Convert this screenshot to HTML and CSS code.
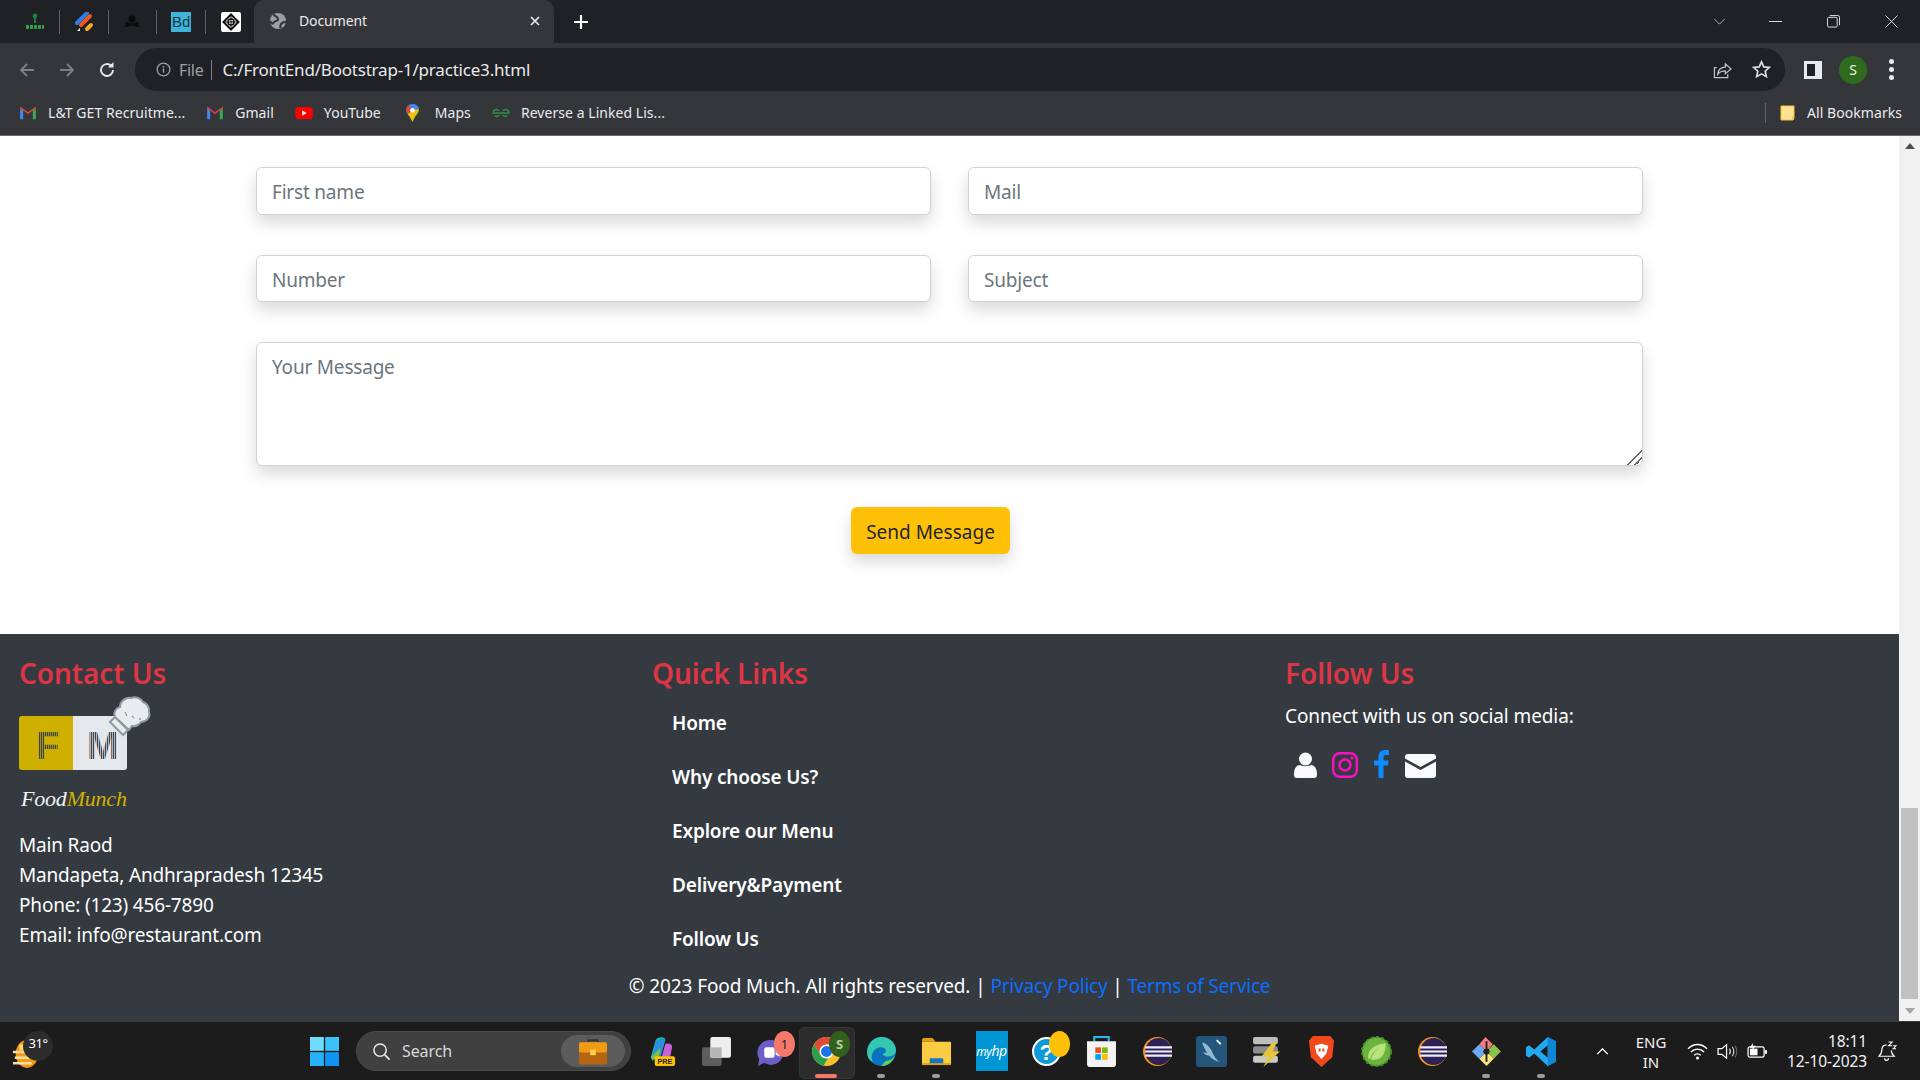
FILE: index.html
```html
<!DOCTYPE html>
<html lang="en">
<head>
<meta charset="utf-8">
<title>Document</title>
<link rel="stylesheet" href="styles.css">
</head>
<body>
<div class="app">
  <div class="tabbar">
    <div class="pins">
      <div class="pin"><svg viewBox="0 0 20 20" class="ic20"><path d="M10 2v9" stroke="#1a7f3c" stroke-width="2"/><circle cx="10" cy="4" r="2.4" fill="#1a7f3c"/><path d="M1 15h18" stroke="#2e9e4f" stroke-width="4" stroke-dasharray="3 1"/></svg></div>
      <div class="pin"><svg viewBox="0 0 20 20" class="ic20"><path d="M3 11 13 1" stroke="#2a7ff0" stroke-width="4" stroke-linecap="round"/><path d="M7 13 16 4" stroke="#f4541d" stroke-width="4" stroke-linecap="round"/><path d="M13 17l4-4" stroke="#f9a825" stroke-width="4" stroke-linecap="round"/><path d="M3 19l3-3v3z" fill="#fff"/></svg></div>
      <div class="pin"><svg viewBox="0 0 20 20" class="ic20"><circle cx="10" cy="7" r="3.5" fill="#0b0b0b"/><path d="M3 14l14-3M3 11l14 3" stroke="#0b0b0b" stroke-width="2"/></svg></div>
      <div class="pin"><div class="bd">Bd</div></div>
      <div class="pin last"><svg viewBox="0 0 20 20" class="ic20"><rect width="20" height="20" rx="2" fill="#fff"/><path d="M10 2.500 17.500 10 10 17.500 2.500 10z" fill="none" stroke="#111" stroke-width="2"/><circle cx="10" cy="10" r="3" fill="none" stroke="#111" stroke-width="1.600"/><path d="M10 3v14M3 10h14" stroke="#111" stroke-width="1"/></svg></div>
    </div>
    <div class="tab">
      <svg viewBox="0 0 20 20" class="ic18"><circle cx="10" cy="10" r="9" fill="#9aa0a6"/><path d="M5 3c2 2 5 2 5 5s-4 1-5 4c-1 2-3 0-4-2M13 18c-1-3 0-5 2-6s3-1 4-1" fill="none" stroke="#35363a" stroke-width="2.400"/></svg>
      <span class="tab-title">Document</span>
      <svg viewBox="0 0 12 12" class="ic12"><path d="M2 2l8 8M10 2l-8 8" stroke="#e8eaed" stroke-width="1.700"/></svg>
    </div>
    <svg viewBox="0 0 16 16" class="plus"><path d="M8 1v14M1 8h14" stroke="#fff" stroke-width="2.200"/></svg>
    <div class="winctl">
      <svg viewBox="0 0 14 8" class="wc-chev"><path d="M1 1l6 6 6-6" fill="none" stroke="#bdc1c6" stroke-width="1"/></svg>
      <svg viewBox="0 0 14 14" class="wc"><path d="M0 7h14" stroke="#e8eaed" stroke-width="1"/></svg>
      <svg viewBox="0 0 14 14" class="wc"><rect x=".5" y="2.500" width="10.500" height="10.500" rx="1.500" fill="none" stroke="#e8eaed"/><path d="M3 .5h8.500a2 2 0 0 1 2 2V11" fill="none" stroke="#e8eaed"/></svg>
      <svg viewBox="0 0 14 14" class="wc"><path d="M.5.5l13 13M13.500.5l-13 13" stroke="#e8eaed" stroke-width="1"/></svg>
    </div>
  </div>

  <div class="toolbar">
    <svg viewBox="0 0 18 18" class="nav"><path d="M16 9H3M9 3 3 9l6 6" fill="none" stroke="#7d8085" stroke-width="1.800"/></svg>
    <svg viewBox="0 0 18 18" class="nav"><path d="M2 9h13M9 3l6 6-6 6" fill="none" stroke="#7d8085" stroke-width="1.800"/></svg>
    <svg viewBox="0 0 18 18" class="nav"><path d="M15 9a6 6 0 1 1-2-4.500" fill="none" stroke="#e8eaed" stroke-width="1.900"/><path d="M15.500 1v5.500H10z" fill="#e8eaed"/></svg>
    <div class="omnibox">
      <svg viewBox="0 0 16 16" class="info"><circle cx="8" cy="8" r="6.800" fill="none" stroke="#9aa0a6" stroke-width="1.400"/><path d="M8 7v4.500M8 4.200v1.600" stroke="#9aa0a6" stroke-width="1.500"/></svg>
      <span class="scheme">File</span>
      <span class="url">C:/FrontEnd/Bootstrap-1/practice3.html</span>
      <span class="spacer"></span>
      <svg viewBox="0 0 20 20" class="omni-ic"><path d="M4 8H1.500v10.500h14V15" fill="none" stroke="#bdc1c6" stroke-width="1.300"/><path d="M5 15c.5-5 4-7.500 8-7.500V4l6 5.500-6 5V11.500c-3.500 0-6 1-8 3.500z" fill="none" stroke="#bdc1c6" stroke-width="1.300"/></svg>
      <svg viewBox="0 0 20 20" class="omni-ic"><path d="m10 2 2.400 5.300 5.800.6-4.300 3.900 1.200 5.700-5.100-2.900-5.100 2.900 1.200-5.700L1.800 7.900l5.800-.6z" fill="none" stroke="#dadce0" stroke-width="1.800"/></svg>
    </div>
    <div class="panel-ic"><div class="panel-l"></div></div>
    <div class="avatar">S</div>
    <div class="dots"><i></i><i></i><i></i></div>
  </div>

  <div class="bookmarks">
    <div class="bm"><svg viewBox="0 0 20 16" class="bm-ic"><path d="M1 15V2.500l3.500 2.500V15z" fill="#4285f4"/><path d="M15.500 15V5L19 2.500V15z" fill="#34a853"/><path d="M1 2.500 10 9l9-6.500v-2L15.500 3 10 7 4.500 3 1 .5z" fill="#ea4335"/></svg><span>L&amp;T GET Recruitme...</span></div>
    <div class="bm"><svg viewBox="0 0 20 16" class="bm-ic"><path d="M1 15V2.500l3.500 2.500V15z" fill="#4285f4"/><path d="M15.500 15V5L19 2.500V15z" fill="#34a853"/><path d="M1 2.500 10 9l9-6.500v-2L15.500 3 10 7 4.500 3 1 .5z" fill="#ea4335"/></svg><span>Gmail</span></div>
    <div class="bm"><svg viewBox="0 0 20 16" class="bm-ic"><rect y="1" width="20" height="14" rx="4" fill="#f00"/><path d="m8 5 5 3-5 3z" fill="#fff"/></svg><span>YouTube</span></div>
    <div class="bm"><svg viewBox="0 0 16 22" class="bm-map"><path d="M8 1a7 7 0 0 0-7 7c0 4 4 6 7 13 3-7 7-9 7-13a7 7 0 0 0-7-7z" fill="#34a853"/><path d="M8 1a7 7 0 0 1 7 5L3 12 1 8a7 7 0 0 1 7-7z" fill="#4285f4"/><path d="M1 8a7 7 0 0 1 3-5.600L8 8l-5 4z" fill="#ea4335"/><path d="M3 12 8 8l7-1c0 3-3 5-5 9l-2 5c-1-3-3-6-5-9z" fill="#fbbc04"/><circle cx="8" cy="8" r="2.600" fill="#fff"/></svg><span>Maps</span></div>
    <div class="bm"><svg viewBox="0 0 20 12" class="bm-ic"><path d="M10 6H1a4 4 0 0 1 7-2.500M10 6h9a4 4 0 0 0-7-2.500M3 9a4 4 0 0 0 5-.5M17 9a4 4 0 0 1-5-.5" fill="none" stroke="#2f8d46" stroke-width="1.700"/></svg><span>Reverse a Linked Lis...</span></div>
    <span class="spacer"></span>
    <div class="bm-sep"></div>
    <div class="bm all"><svg viewBox="0 0 16 16" class="bm-folder"><path d="M1 1h13v12l-1 2H1z" fill="#fde293" stroke="#f2c53d" stroke-width="1"/><path d="M12 15v-3l2-1v4z" fill="#f2c53d"/></svg><span>All Bookmarks</span></div>
  </div>

  <div class="viewport">
    <div class="page">
      <section class="contact">
        <form class="form-grid">
          <input class="field" type="text" placeholder="First name">
          <input class="field" type="text" placeholder="Mail">
          <input class="field" type="text" placeholder="Number">
          <input class="field" type="text" placeholder="Subject">
          <textarea class="field message" placeholder="Your Message"></textarea>
        </form>
        <button class="send" type="button">Send Message</button>
      </section>

      <footer class="footer">
        <div class="cols">
          <div class="col">
            <h3>Contact Us</h3>
            <svg class="logo" viewBox="0 0 135 74">
              <defs>
                <pattern id="stripe" width="2" height="2" patternUnits="userSpaceOnUse"><rect width="1.300" height="2" fill="#3f454b"/></pattern>
              </defs>
              <path d="M3 20h51v54H3a3 3 0 0 1-3-3V23a3 3 0 0 1 3-3z" fill="#cfb000"/>
              <path d="M54 20h51a3 3 0 0 1 3 3v48a3 3 0 0 1-3 3H54z" fill="#e4e7eb"/>
              <text x="17" y="63" class="logo-letter" fill="url(#stripe)">F</text>
              <text x="68" y="63" class="logo-letter" fill="url(#stripe)">M</text>
              <path d="M91 26 104 39l5-5-13-13z" fill="#e9ecef" stroke="#8f98a3" stroke-width="2"/>
              <path d="M96 21c-2-5 1-9 5-10 0-6 6-10 11-9 4-2 10 0 12 4 4 1 7 6 6 10 2 5-3 10-8 10-2 3-6 5-9 4l-3 4z" fill="#e9ecef" stroke="#8f98a3" stroke-width="2"/>
              <path d="M106 16l2 4M113 20l2 2M120 23l2 0" stroke="#8f98a3" stroke-width="1.300"/>
            </svg>
            <div class="brand"><span class="brand-a">Food</span><span class="brand-b">Munch</span></div>
            <address>
              <div>Main Raod</div>
              <div>Mandapeta, Andhrapradesh 12345</div>
              <div>Phone: (123) 456-7890</div>
              <div>Email: info@restaurant.com</div>
            </address>
          </div>
          <div class="col">
            <h3>Quick Links</h3>
            <ul class="links">
              <li>Home</li>
              <li>Why choose Us?</li>
              <li>Explore our Menu</li>
              <li>Delivery&amp;Payment</li>
              <li>Follow Us</li>
            </ul>
          </div>
          <div class="col">
            <h3>Follow Us</h3>
            <p class="connect">Connect with us on social media:</p>
            <div class="social">
              <svg viewBox="0 0 23 26" class="s-person"><circle cx="11.500" cy="7" r="6.500" fill="#f8f9fa"/><path d="M0 22c0-6 3-9 6-9 2 1.500 9 1.500 11 0 3 0 6 3 6 9v1a3 3 0 0 1-3 3H3a3 3 0 0 1-3-3z" fill="#f8f9fa"/></svg>
              <svg viewBox="0 0 26 26" class="s-insta"><rect x="1.200" y="1.200" width="23.600" height="23.600" rx="6.500" fill="none" stroke="#ff0fc4" stroke-width="2.400"/><circle cx="13" cy="13" r="5.500" fill="none" stroke="#ff0fc4" stroke-width="2.400"/><circle cx="20" cy="6" r="1.600" fill="#ff0fc4"/></svg>
              <svg viewBox="0 0 15 28" class="s-fb"><path d="M4.500 28V15.500H0V10.500h4.500V7c0-4.500 2.500-7 6.500-7 1.500 0 3 .1 4 .3V5h-2.800C10 5 9.500 6 9.500 7.500v3h5.200l-.8 5H9.500V28z" fill="#0d8bff"/></svg>
              <svg viewBox="0 0 31 24" class="s-mail"><path d="M3 0h25a3 3 0 0 1 3 3v1.500L15.500 13 0 4.500V3a3 3 0 0 1 3-3z" fill="#f8f9fa"/><path d="M0 7.500l15.500 8.500L31 7.500V21a3 3 0 0 1-3 3H3a3 3 0 0 1-3-3z" fill="#f8f9fa"/></svg>
            </div>
          </div>
        </div>
        <p class="copyright">© 2023 Food Much. All rights reserved. | <a>Privacy Policy</a> | <a>Terms of Service</a></p>
      </footer>
    </div>
    <div class="scrollbar">
      <div class="sb-btn"><svg viewBox="0 0 10 6" class="sb-arrow"><path d="M5 0l5 6H0z" fill="#505050"/></svg></div>
      <div class="sb-track"><div class="sb-thumb"></div></div>
      <div class="sb-btn"><svg viewBox="0 0 10 6" class="sb-arrow"><path d="M5 6 0 0h10z" fill="#a3a3a3"/></svg></div>
    </div>
  </div>

  <div class="taskbar">
    <div class="weather">
      <svg viewBox="0 0 30 34" class="wx"><ellipse cx="16" cy="18" rx="12" ry="15" fill="#f59a13"/><path d="M8 8h16v6H8z" fill="#ffd970"/><path d="M1 16h22M3 22h26M1 28h20" stroke="#f6dca5" stroke-width="2.600"/></svg>
      <span class="wx-temp">31°</span>
    </div>
    <svg viewBox="0 0 30 30" class="win"><rect width="14.300" height="14.300" fill="#6fdcfd"/><rect x="15.700" width="14.300" height="14.300" fill="#3cc2fb"/><rect y="15.700" width="14.300" height="14.300" fill="#27b1f8"/><rect x="15.700" y="15.700" width="14.300" height="14.300" fill="#0f94f3"/></svg>
    <div class="search">
      <svg viewBox="0 0 20 20" class="search-ic"><circle cx="8.500" cy="8.500" r="6.500" fill="none" stroke="#e6e6e6" stroke-width="1.600"/><path d="m13.500 13.500 5 5" stroke="#e6e6e6" stroke-width="1.800"/></svg>
      <span class="search-text">Search</span>
      <span class="spacer"></span>
      <div class="search-pill"><svg viewBox="0 0 30 28" class="case"><path d="M10 5V2h10v3" fill="none" stroke="#333" stroke-width="2"/><rect y="4" width="30" height="24" rx="2" fill="#b5650f"/><rect y="4" width="30" height="11" rx="2" fill="#ef9b16"/><rect x="12" y="12" width="6" height="6" fill="#ffd24d"/></svg></div>
    </div>
    <div class="apps">
      <div class="app-ic"><svg viewBox="0 0 30 32"><path d="M4 22 9 4c1-3 8-4 10-1L6 26z" fill="#1fb7a8"/><path d="M8 8c2-5 10-6 11-4l-5 18H6z" fill="#2a8fe0"/><path d="M15 22l4-14c3-1 7 0 7 3l-2 11z" fill="#c860d8"/><path d="M4 22 14 12l-2 12H6z" fill="#7fc242"/><rect x="8" y="21" width="21" height="10" rx="2" fill="#ffc300"/><text x="18.500" y="29.200" class="pre">PRE</text></svg></div>
      <div class="app-ic"><svg viewBox="0 0 30 30"><rect x="1" y="11" width="19" height="18" rx="2" fill="#5e5e5e"/><rect x="9" y="1" width="20" height="20" rx="2" fill="#eeeeee"/><rect x="9" y="11" width="11" height="10" fill="#b5b5b5"/></svg></div>
      <div class="app-ic badge-wrap"><svg viewBox="0 0 30 30"><path d="M14 4a12 12 0 1 1-6 22l-6 3 1-7A12 12 0 0 1 14 4z" fill="#6b5fc7"/><rect x="8" y="11" width="10" height="10" rx="2" fill="#fff"/><path d="m19 14 4-2v8l-4-2z" fill="#fff"/></svg><span class="badge red">1</span></div>
      <div class="app-ic active badge-wrap"><svg viewBox="0 0 30 30"><circle cx="15" cy="15" r="14" fill="#fbc02d"/><path d="M15 1a14 14 0 0 0-12 7l6 10 6-10h12A14 14 0 0 0 15 1z" fill="#dd4b39"/><path d="M3 8a14 14 0 0 0 9 20.700L18 19l-9-1z" fill="#2e9e4f"/><circle cx="15" cy="15" r="6.800" fill="#fff"/><circle cx="15" cy="15" r="5.300" fill="#1a73e8"/></svg><span class="badge green">S</span><span class="run-bar"></span></div>
      <div class="app-ic dotted"><svg viewBox="0 0 30 30"><circle cx="15" cy="15" r="14" fill="#0c72bd"/><path d="M1 15C2 5 10 1 15 1c8 0 14 6 14 13 0 4-4 6-8 6-3 0-5-2-5-3 3 0 4-2 3-4-2-3-8-3-11 1-3 3-3 8-1 11C3 24 1 20 1 15z" fill="#33c7b0"/><path d="M19 24c4 0 7-2 9-5-2 6-7 10-13 10z" fill="#5fd35e"/></svg></div>
      <div class="app-ic dotted"><svg viewBox="0 0 32 30"><path d="M1 3a2 2 0 0 1 2-2h9l3 4H1z" fill="#e3a008"/><rect x="1" y="5" width="30" height="24" rx="1" fill="#fbcb43"/><rect x="9" y="22" width="14" height="7" rx="1" fill="#1278c8"/><path d="M1 27h30v2H1z" fill="#e3a008"/></svg></div>
      <div class="app-ic"><div class="myhp">my<b>hp</b></div></div>
      <div class="app-ic badge-wrap"><svg viewBox="0 0 30 30"><circle cx="15" cy="15" r="13" fill="#0e9ad7" stroke="#fff" stroke-width="2"/><text x="15" y="23" class="qm">?</text></svg><span class="badge yellow"></span></div>
      <div class="app-ic"><svg viewBox="0 0 30 30"><path d="M8 5V1h14v4" fill="none" stroke="#2db7f2" stroke-width="2"/><path d="M1 5h28v22a3 3 0 0 1-3 3H4a3 3 0 0 1-3-3z" fill="#f4f4f4"/><rect x="9" y="11" width="5.500" height="5.500" fill="#f25022"/><rect x="15.500" y="11" width="5.500" height="5.500" fill="#7fba00"/><rect x="9" y="17.500" width="5.500" height="5.500" fill="#00a4ef"/><rect x="15.500" y="17.500" width="5.500" height="5.500" fill="#ffb900"/></svg></div>
      <div class="app-ic"><svg viewBox="0 0 30 30"><circle cx="16" cy="15" r="14" fill="#f7941e"/><circle cx="17" cy="15" r="13" fill="#2c2255"/><path d="M4 11h26M4 15h26M4 19h26" stroke="#f1eefc" stroke-width="2"/></svg></div>
      <div class="app-ic"><svg viewBox="0 0 30 30"><rect width="30" height="30" rx="3" fill="#24567c"/><path d="M6 6c4 1 7 4 9 8s3 8 8 11c-5-1-8-3-10-6-2 0-5-1-6-3 2 0 3 0 4 1C9 13 7 10 6 6z" fill="#94b9d3"/><path d="M20 4l4 4" stroke="#d6e4ee" stroke-width="2"/></svg></div>
      <div class="app-ic"><svg viewBox="0 0 30 30"><rect x="2" y="1" width="24" height="7" rx="2" fill="#bdbdbd"/><rect x="2" y="10" width="24" height="7" rx="2" fill="#8d8d8d"/><rect x="2" y="19" width="24" height="7" rx="2" fill="#c9c9c9"/><path d="M21 6 10 20h7l-5 10 16-15h-7l4-9z" fill="#e8c33c"/></svg></div>
      <div class="app-ic"><svg viewBox="0 0 28 32"><path d="M14 0h9l4 5-2 17-11 10L3 22 1 5l4-5z" fill="#f1481c"/><path d="M7 10l7-2 7 2-2 8-5 6-5-6z" fill="#fff"/><path d="M11 13h2v3h-2zM15 13h2v3h-2z" fill="#f1481c"/></svg></div>
      <div class="app-ic"><svg viewBox="0 0 30 30"><circle cx="15" cy="15" r="14" fill="#6db33f" stroke="#3f8e2a" stroke-width="2" stroke-dasharray="3 2"/><path d="M7 22c-1-9 6-14 17-15 0 10-4 17-14 16 0-5 3-8 7-11-4 2-7 5-8 10z" fill="#b8e27d"/></svg></div>
      <div class="app-ic"><svg viewBox="0 0 30 30"><circle cx="16" cy="15" r="14" fill="#f7941e"/><circle cx="17" cy="15" r="13" fill="#2c2255"/><path d="M4 11h26M4 15h26M4 19h26" stroke="#f1eefc" stroke-width="2"/></svg></div>
      <div class="app-ic dotted"><svg viewBox="0 0 30 30"><path d="M15 15 8 8l6-7 7 7z" fill="#f57c7c"/><path d="M15 15l7-7 7 7-7 7z" fill="#8bc34a"/><path d="M15 15l7 7-7 7-7-7z" fill="#ffe37a"/><path d="M15 15l-7 7-7-7 7-7z" fill="#6aa9f4"/><circle cx="15" cy="15" r="3" fill="#222"/><path d="M15 5v20" stroke="#222" stroke-width="1.800"/></svg></div>
      <div class="app-ic dotted"><svg viewBox="0 0 30 30"><path d="M21 1 29 5v20l-8 4L8 17l-5 4-3-2v-8l3-2 5 4zM21 9l-7 6 7 6z" fill="#23a9f2" fill-rule="evenodd"/><path d="M21 1 29 5v20l-8 4z" fill="#0e86d4"/></svg></div>
    </div>
    <svg viewBox="0 0 14 8" class="tray-chev"><path d="M1 7l6-6 6 6" fill="none" stroke="#fff" stroke-width="1.600"/></svg>
    <div class="lang"><div>ENG</div><div>IN</div></div>
    <svg viewBox="0 0 22 18" class="tray-ic"><path d="M1 6c6-6 14-6 20 0M4 9.500c4-4 10-4 14 0M7.500 13c2-2 5-2 7 0" fill="none" stroke="#fff" stroke-width="1.500"/><circle cx="11" cy="16" r="1.600" fill="#fff"/></svg>
    <svg viewBox="0 0 22 18" class="tray-ic"><path d="M1 6h4l5-4v14l-5-4H1z" fill="none" stroke="#fff" stroke-width="1.300"/><path d="M13 6c1.500 2 1.500 4 0 6M16 4c2 3 2 7 0 10" fill="none" stroke="#ccc" stroke-width="1.200"/><path d="M19 3c2.500 4 2.500 8 0 12" fill="none" stroke="#666" stroke-width="1.200"/></svg>
    <svg viewBox="0 0 22 18" class="tray-ic"><rect x="1" y="4" width="17" height="11" rx="2" fill="none" stroke="#fff" stroke-width="1.300"/><rect x="3" y="6" width="8" height="7" fill="#fff"/><rect x="19" y="7.500" width="2" height="4" fill="#fff"/><path d="M6 0 3 5h3l-1 4 4-6H6z" fill="#fff"/></svg>
    <div class="clock"><div>18:11</div><div>12-10-2023</div></div>
    <svg viewBox="0 0 20 22" class="bell"><path d="M9 4C5 4 4 7 4 10c0 3-2 5-3 6h16c-1-1-3-3-3-6" fill="none" stroke="#fff" stroke-width="1.300"/><path d="M7 18c0 3 4 3 4 0" fill="none" stroke="#fff" stroke-width="1.300"/><path d="M11 1h4l-4 4h4M16 5h3l-3 3h3" fill="none" stroke="#fff" stroke-width="1.100"/></svg>
  </div>
</div>
</body>
</html>
```

FILE: styles.css
```css
* { box-sizing: border-box; }
html, body { margin: 0; padding: 0; height: 100%; overflow: hidden; }
body { font-family: "Noto Sans", "Open Sans", sans-serif; color: #212529; background: #fff; }
.app { display: flex; flex-direction: column; width: 1920px; height: 1080px; }
.spacer { flex: 1; }
svg { display: block; flex: none; }

/* tab strip */
.tabbar { height: 43px; flex: none; background: #202124; display: flex; align-items: center; padding-left: 11px; }
.pins { display: flex; align-items: center; }
.pin { width: 48.800px; height: 24px; display: flex; align-items: center; justify-content: center; border-right: 1px solid #5f6368; }
.pin.last { border-right: none; }
.ic20 { width: 20px; height: 20px; }
.bd { width: 20px; height: 20px; background: #3fb4d8; color: #10394a; font-size: 15px; line-height: 20px; text-align: center; font-family: "Liberation Sans", sans-serif; }
.tab { width: 300px; height: 43px; margin-left: -1px; background: #35363a; border-radius: 10px 10px 0 0; display: flex; align-items: center; padding: 0 13px 2px 15px; color: #e8eaed; }
.ic18 { width: 18px; height: 18px; }
.ic12 { width: 12px; height: 12px; }
.tab-title { flex: 1; margin-left: 12px; font-size: 14px; letter-spacing: -.1px; }
.plus { width: 16px; height: 16px; margin-left: 19px; }
.winctl { margin-left: auto; display: flex; align-items: center; padding-right: 22px; }
.wc-chev { width: 13px; height: 7px; margin-right: -2px; }
.wc { width: 13px; height: 13px; margin-left: 45px; }

/* toolbar */
.toolbar { height: 53px; flex: none; background: #35363a; display: flex; align-items: center; padding: 0 18px 0 18px; }
.nav { width: 18px; height: 18px; margin-right: 22px; }
.omnibox { width: 1650px; height: 43px; margin-left: -3px; background: #202124; border-radius: 22px; display: flex; align-items: center; padding: 0 14px 0 21px; }
.info { width: 15px; height: 15px; }
.scheme { color: #9aa0a6; font-size: 16px; margin-left: 8px; padding-right: 8px; border-right: 1px solid #7d8085; line-height: 20px; letter-spacing: -.3px; }
.url { color: #e8eaed; font-size: 17px; margin-left: 10px; letter-spacing: -.2px; }
.omni-ic { width: 19px; height: 19px; margin-left: 20px; }
.panel-ic { width: 18px; height: 18px; margin-left: 19px; background: #e8eaed; padding: 3px 7px 3px 3px; }
.panel-l { width: 100%; height: 100%; background: #202124; }
.avatar { width: 28px; height: 28px; margin-left: 17px; border-radius: 50%; background: #2f6b1e; color: #e8f0e4; font-size: 14px; line-height: 28px; text-align: center; }
.dots { margin-left: 22px; display: flex; flex-direction: column; gap: 3px; }
.dots i { width: 5px; height: 5px; border-radius: 50%; background: #e8eaed; }

/* bookmarks */
.bookmarks { height: 40px; flex: none; background: #35363a; border-bottom: 1px solid #6a6b6e; display: flex; align-items: center; padding: 0 18px 6px 19px; color: #e8eaed; font-size: 14px; letter-spacing: .05px; }
.bm { display: flex; align-items: center; margin-right: 21px; }
.bm-ic { width: 18px; height: 14px; margin-right: 11px; }
.bm-map { width: 15px; height: 20px; margin-right: 15px; margin-left: 3px; }
.bm-sep { width: 1px; height: 20px; background: #5f6368; margin-right: 14px; }
.bm.all { margin-right: 0; }
.bm-folder { width: 16px; height: 18px; margin-right: 11px; }

/* page */
.viewport { flex: 1; min-height: 0; display: flex; }
.page { flex: 1; min-width: 0; display: flex; flex-direction: column; }
.contact { flex: 1; padding: 31px 0 0 256px; }
.form-grid { display: grid; grid-template-columns: 675px 675px; grid-template-rows: 47.500px 47.500px 124px; gap: 40px 37px; }
.field { width: 100%; height: 100%; border: 1px solid #ced4da; border-radius: 6px; padding: 8px 15px 5px; font-family: inherit; font-size: 19px; letter-spacing: -.2px; color: #212529; background: #fff; box-shadow: 0 8px 16px rgba(0,0,0,.15); outline: none; }
.field::placeholder { color: #6c757d; opacity: 1; }
.message { grid-column: 1 / 3; padding-top: 11px; resize: vertical; }
.message::-webkit-resizer { background: linear-gradient(135deg, transparent 0 48%, #666 48% 56%, transparent 56% 72%, #666 72% 80%, transparent 80%); }
.send { display: block; width: 159px; height: 47px; margin: 41px 0 0 595px; border: none; border-radius: 6px; background: #ffc107; color: #212529; font-family: inherit; font-size: 19px; padding: 2px 0 0; box-shadow: 0 8px 16px rgba(0,0,0,.15); }

/* footer */
.footer { flex: none; height: 387px; background: #343a40; color: #fff; padding: 22px 0 0 19px; }
.cols { display: grid; grid-template-columns: 633px 633px 1fr; height: 315px; }
.col h3 { margin: 0; height: 34px; font-size: 28px; line-height: 34px; font-weight: 600; color: #dc3545; letter-spacing: -.1px; }
.logo { width: 135px; height: 74px; margin-top: 6px; overflow: visible; }
.logo-letter { font-family: "Liberation Sans", sans-serif; font-weight: 700; font-size: 38px; }
.brand { height: 26px; margin: 16px 0 0 2px; font-family: "Liberation Serif", serif; font-style: italic; font-size: 22px; line-height: 26px; letter-spacing: -.2px; }
.brand-a { color: #f1f3f5; }
.brand-b { color: #cfb000; }
address { font-style: normal; margin-top: 18px; font-size: 19px; line-height: 30px; letter-spacing: -.18px; }
.links { list-style: none; margin: 6px 0 0; padding: 0 0 0 20px; font-weight: 600; font-size: 19px; letter-spacing: -.17px; }
.links li { height: 54px; line-height: 54px; }
.connect { margin: 11px 0 0; font-size: 19px; line-height: 30px; letter-spacing: -.1px; }
.social { display: flex; align-items: flex-end; margin-top: 19px; padding-left: 9px; }
.s-person { width: 23px; height: 26px; }
.s-insta { width: 26px; height: 26px; margin-left: 15px; }
.s-fb { width: 15px; height: 28px; margin-left: 16px; }
.s-mail { width: 31px; height: 24px; margin-left: 16px; }
.copyright { margin: 0 0 0 -19px; text-align: center; font-size: 19px; line-height: 30px; letter-spacing: -.1px; }
.copyright a { color: #0d6efd; letter-spacing: -.2px; }

/* scrollbar */
.scrollbar { width: 21px; flex: none; background: #f1f1f1; display: flex; flex-direction: column; }
.sb-btn { height: 20px; flex: none; display: flex; align-items: center; justify-content: center; }
.sb-arrow { width: 10px; height: 6px; }
.sb-track { flex: 1; display: flex; flex-direction: column; justify-content: flex-end; padding: 0 2px 2px; }
.sb-thumb { height: 191px; background: #c1c1c1; }

/* taskbar */
.taskbar { height: 59px; flex: none; background: #1c1c1c; border-top: 1px solid #3a3a3a; display: flex; align-items: center; color: #fff; }
.weather { width: 46px; margin-left: 12px; position: relative; height: 40px; }
.wx { width: 28px; height: 32px; margin-top: 6px; }
.wx-temp { position: absolute; left: 11px; top: 0; width: 30px; height: 30px; border-radius: 50%; background: #2c2c2c; font-size: 13px; line-height: 24px; text-align: center; letter-spacing: -.5px; }
.win { width: 29px; height: 29px; margin-left: 252px; }
.search { width: 275px; height: 40px; margin-left: 17px; border-radius: 20px; background: #404040; display: flex; align-items: center; padding: 0 5px 0 15px; border: 1px solid #4a4a4a; }
.search-ic { width: 19px; height: 19px; }
.search-text { margin-left: 11px; font-size: 16px; color: #d8d8d8; letter-spacing: -.1px; }
.search-pill { width: 64px; height: 32px; border-radius: 16px; background: #5c5c5c; display: flex; align-items: center; justify-content: center; }
.case { width: 28px; height: 27px; }
.apps { display: flex; margin-left: 3px; }
.app-ic { width: 55px; height: 59px; display: flex; align-items: center; justify-content: center; position: relative; }
.app-ic svg { width: 31px; height: 31px; }
.app-ic.active::before { content: ""; position: absolute; inset: 5px 0 0; width: 54px; margin: 0 auto; height: 50px; border-radius: 5px; background: #2c2c2c; border: 1px solid #353535; }
.app-ic.active svg { position: relative; }
.app-ic.dotted::after { content: ""; position: absolute; left: 23px; bottom: 3px; width: 8px; height: 4px; border-radius: 2px; background: #9b9b9b; }
.run-bar { position: absolute; left: 16px; bottom: 3px; width: 22px; height: 4px; border-radius: 2px; background: #f4796b; }
.badge { position: absolute; width: 21px; height: 26px; border-radius: 50%; left: 30px; top: 9px; font-size: 13px; line-height: 26px; text-align: center; color: #222; }
.badge.red { background: #f4796b; }
.badge.green { background: #33601d; color: #b7cfa5; font-weight: 700; }
.badge.yellow { background: #ffc107; }
.pre { font-family: "Liberation Sans", sans-serif; font-weight: 700; font-size: 7.500px; fill: #222; text-anchor: middle; }
.qm { font-family: "Liberation Sans", sans-serif; font-weight: 700; font-size: 22px; fill: #fff; text-anchor: middle; }
.myhp { width: 32px; height: 40px; background: #0096d6; color: #fff; font-size: 12px; line-height: 40px; text-align: center; font-style: italic; letter-spacing: -.5px; }
.myhp b { font-weight: 400; font-size: 14px; }
.tray-chev { width: 13px; height: 7px; margin-left: 27px; }
.lang { width: 50px; margin-left: 17px; text-align: center; font-size: 15px; line-height: 20px; color: #f2f2f2; padding-top: 1px; }
.tray-ic { width: 21px; height: 17px; margin-left: 9px; }
.lang + .tray-ic { margin-left: 11px; }
.clock { margin-left: 15px; width: 84px; text-align: right; font-size: 15.500px; line-height: 20px; color: #f2f2f2; letter-spacing: -.1px; white-space: nowrap; padding-bottom: 1px; }
.bell { width: 19px; height: 21px; margin-left: 11px; }
```
